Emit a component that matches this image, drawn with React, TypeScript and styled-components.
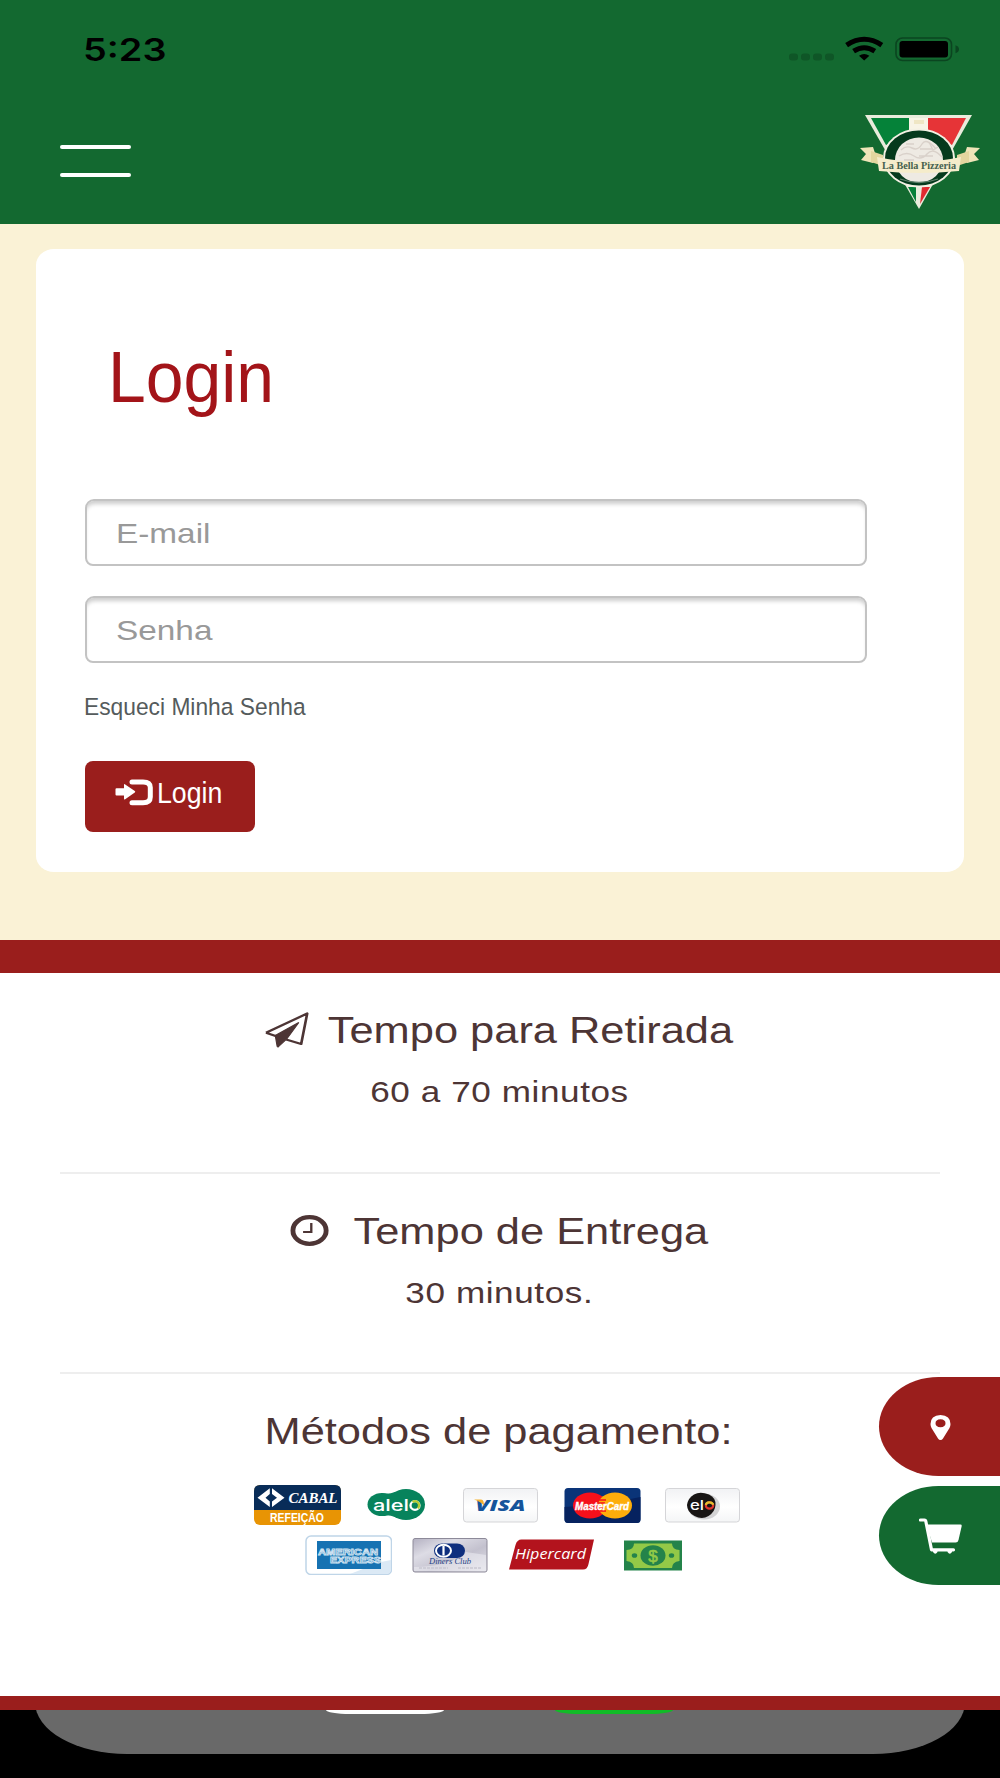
import React, { FC, ReactNode } from 'react';
import styled, { createGlobalStyle } from 'styled-components';

const colors = {
  green: '#136930',
  red: '#9a1e1c',
  title: '#a31419',
  cream: '#faf2d6',
  text: '#4d3535',
  divider: '#eeeeee',
};

const GlobalStyle = createGlobalStyle`
  * {
    box-sizing: border-box;
  }
  body {
    margin: 0;
    background: #000;
    font-family: 'Liberation Sans', Arial, sans-serif;
  }
`;

/* ---------- icons ---------- */

const StatusIcons = () => (
  <svg width="172" height="26" viewBox="0 0 172 26">
    <g fill="#0f5627">
      <rect x="0" y="17.5" width="9" height="7" rx="3" />
      <rect x="12" y="17.5" width="9" height="7" rx="3" />
      <rect x="24" y="17.5" width="9" height="7" rx="3" />
      <rect x="36" y="17.5" width="9" height="7" rx="3" />
    </g>
    <g fill="none" stroke="#000" strokeWidth="5">
      <path d="M57.6 9.2Q75.2-2.6 92.8 9.2" />
      <path d="M64.6 15.2Q75.2 8.2 85.8 15.2" />
    </g>
    <path d="M70 19.8q5.2-3.6 10.4 0L75.2 24.6z" fill="#000" />
    <rect x="107" y="2" width="55.5" height="22.5" rx="6.5" fill="none" stroke="#0b4520" strokeWidth="1.6" />
    <rect x="110.5" y="5" width="48.5" height="16.6" rx="3" fill="#000" />
    <path d="M166.5 9.3q3.5 1.2 3.5 4t-3.5 4z" fill="#0b4520" />
  </svg>
);

const BrandLogo = () => (
  <svg width="120" height="96" viewBox="0 0 120 96">
    <path d="M5 1H112L59 95z" fill="#e9ecdc" />
    <path d="M11 4H49V22L26 31z" fill="#058239" />
    <path d="M68 4H106L92 31L68 20z" fill="#e63437" />
    <path d="M49 4h19v18H49z" fill="#f8f4e6" />
    <path d="M54 8h10" stroke="#efe6c4" strokeWidth="4" />
    <path d="M48 73H56V88z" fill="#078039" />
    <path d="M62 73H70L60 90z" fill="#e22a30" />
    <ellipse cx="59" cy="44" rx="36" ry="29.5" fill="#f4f1e4" />
    <ellipse cx="59" cy="44" rx="34" ry="27.5" fill="#053a1d" />
    <ellipse cx="59" cy="46" rx="24" ry="22.5" fill="#eeeae3" />
    <g fill="none" stroke="#d9d1ca" strokeWidth="1.4">
      <path d="M41 36q5-5 11-2t10-4 14 5M39 42q8-5 15 0t13-2 15 3M46 30h8m6 5h12M44 46h10m5-4h14" />
      <path d="M69 28l4 8 5-3" />
    </g>
    <path d="M0 34l13-1 4 12-4 4-12-3 5-6zM120 34l-13-1-4 12 4 4 12-3-5-6z" fill="#efe4b8" />
    <path d="M11 37l12 4v11l-12-4zM109 37l-12 4v11l12-4z" fill="#e3d69f" />
    <path d="M17 43q42 9 84 0l-2 14q-40 4-80 0z" fill="#f5eccb" />
    <path d="M40 65q19 7 38 0" fill="none" stroke="#5f806b" strokeWidth="1.3" />
    <text x="22" y="54.5" textLength="74" lengthAdjust="spacingAndGlyphs" fontFamily="Liberation Serif, serif" fontWeight="700" fontSize="10.5" fill="#45614f">
      La Bella Pizzeria
    </text>
  </svg>
);

const SignInIcon = () => (
  <svg width="38" height="27" viewBox="0 0 38 27">
    <path d="M1.5 9.3H9V6q0-1.4 1.2-.6l9.6 6.7q1 .7 0 1.4l-9.6 6.700q-1.200.8-1.200-.6V16.500H1.500Q.5 16.500.5 15.500v-5.200q0-1 1-1z" fill="#fff" />
    <path d="M17 3h11q7.300 0 7.300 5.500V18q0 5.700-7.300 5.700H17" fill="none" stroke="#fff" strokeWidth="5" strokeLinecap="round" />
  </svg>
);

const PaperPlaneIcon = () => (
  <svg width="38" height="36" viewBox="0 0 37 36" preserveAspectRatio="none">
    <path d="M1.300 20.700L35.500 1.500L30.500 32L18 27.500M10.500 24.500L1.300 20.700" fill="none" stroke={colors.text} strokeWidth="2.200" strokeLinejoin="round" />
    <path d="M9 23.500L28.500 10.500L18.500 27L11.800 34.500Q10.600 35.500 10.500 34z" fill={colors.text} stroke={colors.text} strokeWidth="1" />
  </svg>
);

const ClockIcon = () => (
  <svg width="33" height="31" viewBox="0 0 33 31">
    <ellipse cx="16.500" cy="15.500" rx="14.200" ry="13.300" fill="none" stroke={colors.text} strokeWidth="4.200" />
    <path d="M18 8v9h-7" fill="none" stroke={colors.text} strokeWidth="2" />
  </svg>
);

const PinIcon = () => (
  <svg width="21" height="25" viewBox="0 0 21 25">
    <path
      fillRule="evenodd"
      fill="#fff"
      d="M10.500 0Q20.500.5 20.500 9q0 2-1 4L13 23.500Q12 25 10.500 25T8 23.500L1.500 13q-1-2-1-4Q.5.5 10.500 0zM10.500 4.300q-5 .3-5 4t5 4q5-.3 5-4t-5-4z"
    />
  </svg>
);

const CartIcon = () => (
  <svg width="43" height="37" viewBox="0 0 43 37">
    <path d="M1.500 2H5.500q1 0 1.300 1.200L12.500 31.800H34.500" fill="none" stroke="#fff" strokeWidth="3.200" strokeLinecap="round" strokeLinejoin="round" />
    <path d="M7.500 6.500H41.500q1.500 0 1.200 1.600L39.500 22q-.6 2.500-2.800 2.500H13z" fill="#fff" />
    <path d="M14 32h4.500v2q-2.200 3.500-4.500 0zM28.500 32H33v2q-2.200 3.500-4.500 0z" fill="#fff" />
  </svg>
);

/* ---------- payment brands ---------- */

const BrandCell: FC<{ children: ReactNode }> = ({ children }) => (
  <svg width="87" height="40" viewBox="0 0 87 40">
    {children}
  </svg>
);

const Cabal = () => (
  <BrandCell>
    <rect width="87" height="40" rx="6" fill="#e89404" />
    <path d="M0 25V6q0-6 6-6h75q6 0 6 6v19z" fill="#082c58" />
    <path d="M15.800 3.200V9L11.500 12.700l4.300 3.700V22L3.500 12.700zM18 3.200V9l5 3.700-5 3.700V22l12.500-9.300z" fill="#fff" />
    <text x="34.500" y="17.500" textLength="49" lengthAdjust="spacingAndGlyphs" fontFamily="Liberation Serif, serif" fontWeight="700" fontStyle="italic" fontSize="14" fill="#fff">CABAL</text>
    <text x="16" y="36.500" textLength="54" lengthAdjust="spacingAndGlyphs" fontFamily="Liberation Sans, sans-serif" fontWeight="700" fontSize="12" fill="#fff">REFEIÇÃO</text>
  </BrandCell>
);

const Alelo = () => (
  <BrandCell>
    <ellipse cx="27" cy="19.500" rx="14.500" ry="11.500" fill="#07835c" />
    <ellipse cx="51" cy="19.500" rx="19" ry="15.500" fill="#07835c" />
    <path d="M26 8q7 2 14-1v25q-7-3-14-1z" fill="#07835c" />
    <g fill="none" stroke="#fff" strokeWidth="2.300">
      <ellipse cx="60" cy="20.500" rx="4.500" ry="4.300" />
      <path d="M57.500 17q3.300-2 5.500.5t0 6" stroke="#b5cb32" />
    </g>
    <text x="18" y="25.500" textLength="36" lengthAdjust="spacingAndGlyphs" fontFamily="Inter, sans-serif" fontWeight="500" fontSize="16" fill="#fff">alel</text>
  </BrandCell>
);

const CardFace = () => <rect x="6.500" y="3.500" width="74" height="33.500" rx="3" fill="url(#card-face)" stroke="#d5d5d8" />;

const CardFaceGradient = () => (
  <defs>
    <linearGradient id="card-face" x1="0" y1="0" x2="0" y2="1">
      <stop offset="0" stopColor="#f1f2f4" />
      <stop offset=".55" stopColor="#ffffff" />
      <stop offset="1" stopColor="#f4f5f6" />
    </linearGradient>
  </defs>
);

const Visa = () => (
  <BrandCell>
    <CardFaceGradient />
    <CardFace />
    <text x="18.500" y="26" textLength="50" lengthAdjust="spacingAndGlyphs" fontFamily="Open Sans, sans-serif" fontWeight="800" fontStyle="italic" fontSize="16" fill="#15549b">VISA</text>
    <path d="M17 14.500h7q2 0 2.500 2l.8 4.500Q24 16.500 17 14.500z" fill="#f3b233" />
  </BrandCell>
);

const MasterCard = () => (
  <BrandCell>
    <rect x="6.500" y="3" width="76" height="35" rx="3.500" fill="#0a3478" />
    <path d="M6.500 22q40-2 76-10v22q0 4-4 4H10.500q-4 0-4-4z" fill="#06225f" />
    <ellipse cx="32" cy="20.500" rx="17" ry="13" fill="#f5101b" />
    <ellipse cx="57" cy="20.500" rx="17" ry="13" fill="#fdad0b" />
    <path d="M41 15h7M40 18h7M40 23h7M41 26h7" stroke="#f5101b" strokeWidth="1.300" />
    <text x="17" y="25" textLength="54" lengthAdjust="spacingAndGlyphs" fontFamily="Liberation Sans, sans-serif" fontWeight="700" fontStyle="italic" fontSize="11.500" fill="#fff" stroke="#fff" strokeWidth=".4">MasterCard</text>
  </BrandCell>
);

const Elo = () => (
  <BrandCell>
    <CardFace />
    <ellipse cx="45" cy="21.500" rx="16" ry="13" fill="#b9b9bb" opacity=".6" />
    <path d="M28 20q1-7 7-10.500t15 0Q57 13 56.500 20t-7 11-14 0T28 20z" fill="#181514" />
    <text x="31" y="24.500" textLength="14" lengthAdjust="spacingAndGlyphs" fontFamily="Inter, sans-serif" fontWeight="500" fontSize="13" fill="#fff">el</text>
    <ellipse cx="50.500" cy="20.500" rx="3.700" ry="3.200" fill="none" stroke="#e2362f" strokeWidth="2.200" />
    <path d="M46.800 20q.5-3 3.700-2.700t3.700 2.500" fill="none" stroke="#e3bf2f" strokeWidth="2.200" />
  </BrandCell>
);

const Amex = () => (
  <BrandCell>
    <rect x="1" y="1" width="85.500" height="38.500" rx="5" fill="#fff" stroke="#bfd5e8" strokeWidth="1.500" />
    <path d="M45 39L76 27l10-2v9q0 5-5 5z" fill="#dbe9f5" />
    <rect x="12" y="6" width="64" height="28" fill="#1672b2" />
    <g fontFamily="Liberation Sans, sans-serif" fontWeight="700" fontSize="8.500" fill="#1672b2" stroke="#cfe3f1" strokeWidth=".8">
      <text x="13" y="19.500" textLength="60" lengthAdjust="spacingAndGlyphs">AMERICAN</text>
      <text x="25" y="28" textLength="51" lengthAdjust="spacingAndGlyphs">EXPRESS</text>
    </g>
  </BrandCell>
);

const Diners = () => (
  <BrandCell>
    <defs>
      <linearGradient id="diners-face" x1="0" y1="0" x2="1" y2="1">
        <stop offset="0" stopColor="#b3b0c1" />
        <stop offset=".3" stopColor="#dddce5" />
        <stop offset=".6" stopColor="#c3c1ce" />
        <stop offset="1" stopColor="#e5e4ea" />
      </linearGradient>
    </defs>
    <rect x="7" y="3.500" width="74" height="33.500" rx="2" fill="url(#diners-face)" stroke="#8d8a99" />
    <path d="M8 32q34 0 52-15l20 3v16H8z" fill="#efeff4" opacity=".55" />
    <rect x="28" y="8.500" width="31" height="14.500" rx="8" fill="#0f2f7e" />
    <ellipse cx="37.500" cy="15.700" rx="7.500" ry="6" fill="#0f2f7e" stroke="#fff" strokeWidth="2" />
    <path d="M37.500 11v9.500" stroke="#fff" strokeWidth="2.200" />
    <text x="23" y="29" textLength="42" lengthAdjust="spacingAndGlyphs" fontFamily="Liberation Serif, serif" fontStyle="italic" fontSize="8" fill="#243f86">Diners Club</text>
    <path d="M13 33h29M52 33h23" stroke="#c9c7d2" strokeWidth="1.500" strokeDasharray="3 1" />
  </BrandCell>
);

const Hipercard = () => (
  <BrandCell>
    <path d="M8.500 10q1.500-5.500 6-5.500H87L81.500 29Q80.500 34.500 76 34.500H2z" fill="#b3131d" />
    <text x="8" y="23.500" textLength="71" lengthAdjust="spacingAndGlyphs" fontFamily="Open Sans, sans-serif" fontStyle="italic" fontWeight="500" fontSize="14" fill="#fff">Hipercard</text>
  </BrandCell>
);

const Cash = () => (
  <BrandCell>
    <rect x="16" y="5.500" width="58" height="30" fill="#24834a" />
    <path d="M26 8.500H64q0 6 7.500 6.500V26q-7.500 1-7.500 7H26q0-6-7.500-7V15q7.500-.5 7.500-6.500z" fill="#93c947" />
    <ellipse cx="45" cy="20.500" rx="12.500" ry="10.200" fill="#24834a" />
    <ellipse cx="26.500" cy="20.500" rx="2.700" ry="2.300" fill="#24834a" />
    <ellipse cx="63.500" cy="20.500" rx="2.700" ry="2.300" fill="#24834a" />
    <text x="45" y="26.500" textAnchor="middle" fontFamily="Liberation Sans, sans-serif" fontSize="17" fill="#93c947" stroke="#93c947" strokeWidth=".6">$</text>
  </BrandCell>
);

/* ---------- page ---------- */

const App: FC = () => (
  <Screen>
    <GlobalStyle />
    <Header>
      <StatusBar>
        <Clock>5:23</Clock>
        <StatusIcons />
      </StatusBar>
      <NavBar>
        <MenuButton aria-label="Menu">
          <MenuLine />
          <MenuLine />
        </MenuButton>
        <BrandLogo />
      </NavBar>
    </Header>

    <Main>
      <LoginCard>
        <Title>
          <Stretch $scale={0.93}>Login</Stretch>
        </Title>
        <Field type="email" placeholder="E-mail" />
        <Field type="password" placeholder="Senha" />
        <ForgotLink>
          <Stretch $scale={0.93}>Esqueci Minha Senha</Stretch>
        </ForgotLink>
        <SubmitButton>
          <SignInIcon />
          <Stretch $scale={0.92}>Login</Stretch>
        </SubmitButton>
      </LoginCard>
    </Main>

    <Info>
      <InfoBlock>
        <InfoTitle $gap={16}>
          <PaperPlaneIcon />
          Tempo para Retirada
        </InfoTitle>
        <InfoValue>60 a 70 minutos</InfoValue>
      </InfoBlock>
      <InfoBlock>
        <InfoTitle $gap={21}>
          <ClockIcon />
          Tempo de Entrega
        </InfoTitle>
        <InfoValue>30 minutos.</InfoValue>
      </InfoBlock>
      <PaymentBlock>
        <InfoTitle>Métodos de pagamento:</InfoTitle>
        <Brands>
          <Cabal />
          <Alelo />
          <Visa />
          <MasterCard />
          <Elo />
          <Amex />
          <Diners />
          <Hipercard />
          <Cash />
        </Brands>
      </PaymentBlock>
    </Info>

    <BottomBar>
      <Dock>
        <DockButton $color="#fff" />
        <DockButton $color="#11bb27" />
      </Dock>
    </BottomBar>

    <FloatingActions>
      <ActionButton $color={colors.red} aria-label="Endereço">
        <PinIcon />
      </ActionButton>
      <ActionButton $color={colors.green} aria-label="Carrinho">
        <CartIcon />
      </ActionButton>
    </FloatingActions>
  </Screen>
);

const Screen = styled.div`
  position: relative;
  display: flex;
  flex-direction: column;
  width: 1000px;
  height: 1778px;
  overflow: hidden;
`;

const Header = styled.header`
  height: 224px;
  padding-top: 36px;
  background: ${colors.green};
`;

const StatusBar = styled.div`
  display: flex;
  justify-content: space-between;
  height: 78px;
  padding: 0 39px 0 83px;
`;

const Clock = styled.span`
  height: 28px;
  font: 600 31px/28px Inter, sans-serif;
  color: #000;
  transform: scaleX(1.22);
  transform-origin: left;
`;

const NavBar = styled.div`
  display: flex;
  justify-content: space-between;
  padding: 0 20px 0 60px;
`;

const MenuButton = styled.button`
  display: flex;
  flex-direction: column;
  gap: 24px;
  width: 71px;
  padding: 31px 0 0;
  border: 0;
  background: none;
`;

const MenuLine = styled.span`
  height: 4px;
  border-radius: 2px;
  background: #fff;
`;

const Main = styled.main`
  height: 716px;
  padding: 25px 36px 0;
  background: ${colors.cream};
`;

const LoginCard = styled.form`
  display: flex;
  flex-direction: column;
  align-items: flex-start;
  height: 623px;
  padding: 88px 98px 40px 49px;
  border-radius: 18px / 16px;
  background: #fff;
`;

const Stretch = styled.span<{ $scale: number }>`
  display: inline-block;
  white-space: nowrap;
  transform: scaleX(${({ $scale }) => $scale});
  transform-origin: left;
`;

const Title = styled.h1`
  margin: 0 0 83px;
  padding-left: 23px;
  font-size: 73px;
  font-weight: 400;
  line-height: 79px;
  color: ${colors.title};
`;

const Field = styled.input`
  width: 782px;
  height: 67px;
  margin: 0 0 30px;
  padding: 2px 29px 0;
  border: 2px solid #c3c3c3;
  border-radius: 9px 9px 8px 8px;
  outline: 0;
  background: #fff;
  box-shadow: inset 0 5px 4px -2px rgba(0, 0, 0, 0.2);
  font: 28.5px 'Liberation Sans', Arial, sans-serif;

  &::placeholder {
    color: #999;
    opacity: 1;
    transform: scaleX(1.17);
    transform-origin: left;
  }
`;

const ForgotLink = styled.a`
  margin: -1px 0 39px -1px;
  font-size: 24.5px;
  line-height: 30px;
  color: #555b5c;
`;

const SubmitButton = styled.button`
  display: flex;
  gap: 4px;
  width: 170px;
  height: 71px;
  padding: 14px 0 0 30px;
  border: 0;
  border-radius: 8px;
  background: ${colors.red};
  font: 29px/36px 'Liberation Sans', Arial, sans-serif;
  color: #fff;

  svg {
    flex: none;
    margin-top: 4px;
  }
`;

const Info = styled.section`
  height: 756px;
  border-top: 33px solid ${colors.red};
  padding: 0 60px;
  background: #fff;
`;

const InfoBlock = styled.div`
  display: flex;
  flex-direction: column;
  align-items: center;
  height: 200.5px;
  padding-top: 38px;
  border-bottom: 2px solid ${colors.divider};
`;

const PaymentBlock = styled.div`
  display: flex;
  flex-direction: column;
  align-items: center;
  padding-top: 38px;
`;

const InfoTitle = styled.h2<{ $gap?: number }>`
  display: flex;
  align-items: center;
  gap: ${({ $gap = 0 }) => $gap}px;
  margin: 0;
  font-size: 37px;
  font-weight: 400;
  line-height: 40px;
  white-space: nowrap;
  color: ${colors.text};
  transform: translateX(-1px) scaleX(1.173);

  svg {
    position: relative;
    top: -1px;
  }
`;

const InfoValue = styled.p`
  margin: 24px 0 0;
  font-size: 30px;
  line-height: 34px;
  letter-spacing: 0.5px;
  color: ${colors.text};
  transform: translateX(-1px) scaleX(1.17);
`;

const Brands = styled.div`
  display: flex;
  flex-wrap: wrap;
  justify-content: center;
  gap: 10px 14.25px;
  width: 493px;
  margin-top: 33px;
`;

const BottomBar = styled.footer`
  flex: 1;
  border-top: 14px solid ${colors.red};
  background: #000;
  overflow: hidden;
`;

/* The upper part of the dock stays hidden behind the red edge. */
const Dock = styled.div`
  display: flex;
  gap: 111px;
  height: 56px;
  margin: -12px 35px 0;
  padding: 12px 0 0 291px;
  border-radius: 0 0 92px 92px / 0 0 52px 52px;
  background: #696969;
`;

const DockButton = styled.span<{ $color: string }>`
  width: 118px;
  height: 4px;
  border-radius: 0 0 24px 24px / 0 0 4px 4px;
  background: ${({ $color }) => $color};
`;

const FloatingActions = styled.div`
  position: absolute;
  top: 1377px;
  right: 0;
  display: flex;
  flex-direction: column;
  gap: 10px;
`;

const ActionButton = styled.button<{ $color: string }>`
  display: flex;
  align-items: center;
  justify-content: center;
  width: 121px;
  height: 99px;
  padding: 1px 0 0 1px;
  border: 0;
  border-radius: 60px 0 0 60px / 50px 0 0 50px;
  background: ${({ $color }) => $color};
`;

export default App;
